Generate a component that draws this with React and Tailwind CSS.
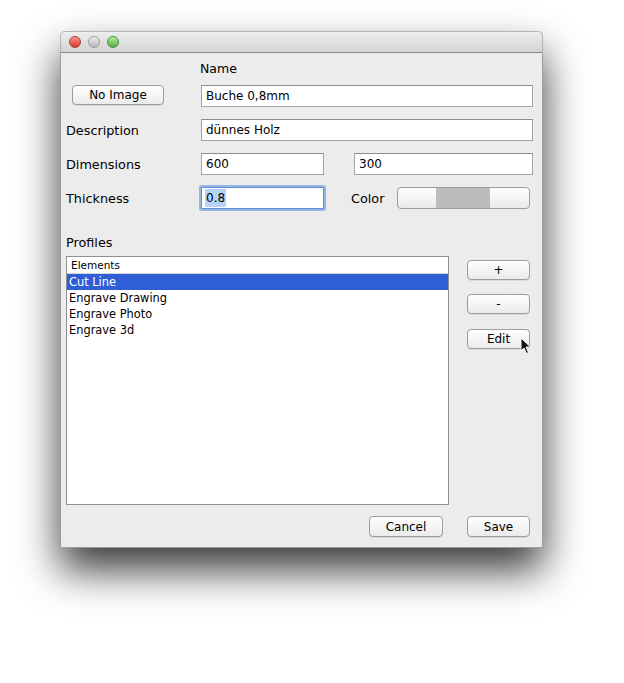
import React from "react";

const font = { fontFamily: '"DejaVu Sans", "Liberation Sans", sans-serif' };

const Field = ({ value, className = "" }) => (
  <div
    className={`h-[22px] bg-white border border-[#a3a3a3] border-t-[#8c8c8c] flex items-center pl-[4px] text-[12px] text-black ${className}`}
  >
    {value}
  </div>
);

const Button = ({ label, className = "" }) => (
  <div
    className={`h-[20px] rounded-[4px] border border-[#9d9d9d] bg-gradient-to-b from-[#ffffff] to-[#ebebeb] shadow-[0_1px_0_rgba(0,0,0,0.08)] flex items-center justify-center text-[12px] text-black ${className}`}
  >
    {label}
  </div>
);

const Light = ({ from, to, border }) => (
  <div
    className={`w-[12px] h-[12px] rounded-full border ${border} bg-gradient-to-b ${from} ${to}`}
  />
);

export default function App() {
  const rows = ["Engrave Drawing", "Engrave Photo", "Engrave 3d"];

  return (
    <div className="w-[624px] h-[683px] bg-white pt-[31px] pl-[60px]" style={font}>
      <div className="relative w-[483px] h-[517px] rounded-t-[5px] shadow-[0_22px_42px_rgba(0,0,0,0.78)] flex flex-col">
        {/* title bar */}
        <div className="h-[22px] rounded-t-[5px] bg-gradient-to-b from-[#eeeeee] to-[#d3d3d3] border border-[#b5b5b5] border-b-[#8a8a8a] flex items-center gap-[7px] pl-[8px]">
          <Light from="from-[#ff8f88]" to="to-[#d9302a]" border="border-[#a8413b]" />
          <Light from="from-[#eeeeee]" to="to-[#b8b8b8]" border="border-[#9a9a9a]" />
          <Light from="from-[#b8ef9a]" to="to-[#4fae3a]" border="border-[#4c8a3d]" />
        </div>

        {/* body */}
        <div className="flex-1 bg-[#ececec] border-x border-b border-[#9e9e9e] pl-[5px] pr-[9px] flex flex-col">
          <div className="mt-[8px] h-[16px] pl-[134px] text-[12.5px] leading-[16px]">Name</div>

          <div className="mt-[8px] flex items-start">
            <div className="w-[135px] pl-[6px]">
              <Button label="No Image" className="w-[92px]" />
            </div>
            <Field value="Buche 0,8mm" className="flex-1" />
          </div>

          <div className="mt-[12px] flex items-center">
            <div className="w-[135px] text-[12.8px] pt-[1px]">Description</div>
            <Field value="dünnes Holz" className="flex-1" />
          </div>

          <div className="mt-[12px] flex items-center">
            <div className="w-[135px] text-[12.8px] pt-[1px]">Dimensions</div>
            <Field value="600" className="w-[123px]" />
            <Field value="300" className="ml-[30px] flex-1" />
          </div>

          <div className="mt-[12px] flex items-center">
            <div className="w-[135px] text-[12.8px] pt-[1px]">Thickness</div>
            <div className="w-[123px] h-[22px] bg-white border border-[#5f8fd0] shadow-[0_0_0_2px_rgba(110,160,225,0.7)] rounded-[1px] flex items-center pl-[3px] text-[12px]">
              <span className="bg-[#b5d3f7] px-[1px]">0.8</span>
            </div>
            <div className="ml-[27px] w-[46px] text-[12.8px] pt-[1px]">Color</div>
            <div className="w-[133px] h-[22px] rounded-[4px] border border-[#9d9d9d] bg-gradient-to-b from-[#ffffff] to-[#e9e9e9] flex overflow-hidden">
              <div className="w-[38px]" />
              <div className="w-[54px] bg-[#bcbcbc]" />
            </div>
          </div>

          <div className="mt-[26px] h-[16px] text-[12.8px] leading-[16px]">Profiles</div>

          <div className="mt-[5px] flex items-start">
            <div className="w-[383px] h-[249px] bg-white border border-[#8f8f8f] flex flex-col">
              <div className="h-[17px] border-b border-[#d6d6d6] pl-[4px] text-[10.5px] leading-[16px]">
                Elements
              </div>
              <div className="h-[16px] bg-[#2e5fd6] text-white pl-[2px] text-[11.4px] leading-[16px]">
                Cut Line
              </div>
              {rows.map((r) => (
                <div key={r} className="h-[16px] pl-[2px] text-[11.4px] leading-[16px]">
                  {r}
                </div>
              ))}
            </div>
            <div className="ml-[18px] pt-[4px] flex flex-col gap-[14px]">
              <Button label="+" className="w-[63px]" />
              <Button label="-" className="w-[63px]" />
              <Button label="Edit" className="w-[63px] mt-[1px]" />
            </div>
          </div>

          <div className="mt-[11px] flex justify-end gap-[24px] pr-[3px]">
            <Button label="Cancel" className="w-[74px] h-[21px]" />
            <Button label="Save" className="w-[63px] h-[21px]" />
          </div>
        </div>

        {/* mouse pointer over Edit */}
        <svg className="absolute left-[460px] top-[306px]" width="12" height="18" viewBox="0 0 12 18">
          <path d="M1 1 L1 14 L4 11 L6.5 16.5 L8.5 15.5 L6 10 L10.5 10 Z" fill="#111" stroke="#fff" strokeWidth="1" />
        </svg>
      </div>
    </div>
  );
}
